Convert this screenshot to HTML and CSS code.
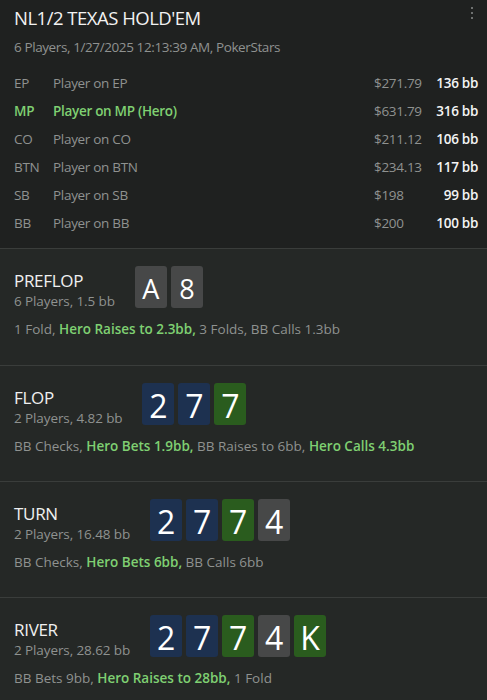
FILE: index.html
```html
<!DOCTYPE html>
<html>
<head>
<meta charset="utf-8">
<link rel="stylesheet" href="styles.css">
</head>
<body>
<div class="header">
  <div class="menu"><span></span><span></span><span></span></div>
  <div class="title">NL1/2 TEXAS HOLD'EM</div>
  <div class="sub">6 Players, 1/27/2025 12:13:39 AM, PokerStars</div>
  <div class="players">
    <div class="row"><span class="pos">EP</span><span class="name">Player on EP</span><span class="money">$271.79</span><span class="bb">136 bb</span></div>
    <div class="row hero"><span class="pos">MP</span><span class="name">Player on MP (Hero)</span><span class="money">$631.79</span><span class="bb">316 bb</span></div>
    <div class="row"><span class="pos">CO</span><span class="name">Player on CO</span><span class="money">$211.12</span><span class="bb">106 bb</span></div>
    <div class="row"><span class="pos">BTN</span><span class="name">Player on BTN</span><span class="money">$234.13</span><span class="bb">117 bb</span></div>
    <div class="row"><span class="pos">SB</span><span class="name">Player on SB</span><span class="money">$198</span><span class="bb">99 bb</span></div>
    <div class="row"><span class="pos">BB</span><span class="name">Player on BB</span><span class="money">$200</span><span class="bb">100 bb</span></div>
  </div>
</div>

<div class="street">
  <div class="street-top">
    <div class="street-info">
      <div class="street-name">PREFLOP</div>
      <div class="street-sub">6 Players, 1.5 bb</div>
    </div>
    <div class="cards hole">
      <div class="card gray">A</div>
      <div class="card gray">8</div>
    </div>
  </div>
  <div class="actions">1 Fold, <b>Hero Raises to 2.3bb,</b> 3 Folds, BB Calls 1.3bb</div>
</div>

<div class="street">
  <div class="street-top">
    <div class="street-info">
      <div class="street-name">FLOP</div>
      <div class="street-sub">2 Players, 4.82 bb</div>
    </div>
    <div class="cards board">
      <div class="card blue">2</div>
      <div class="card blue">7</div>
      <div class="card green">7</div>
    </div>
  </div>
  <div class="actions">BB Checks, <b>Hero Bets 1.9bb,</b> BB Raises to 6bb, <b>Hero Calls 4.3bb</b></div>
</div>

<div class="street">
  <div class="street-top">
    <div class="street-info">
      <div class="street-name">TURN</div>
      <div class="street-sub">2 Players, 16.48 bb</div>
    </div>
    <div class="cards board">
      <div class="card blue">2</div>
      <div class="card blue">7</div>
      <div class="card green">7</div>
      <div class="card gray">4</div>
    </div>
  </div>
  <div class="actions">BB Checks, <b>Hero Bets 6bb,</b> BB Calls 6bb</div>
</div>

<div class="street">
  <div class="street-top">
    <div class="street-info">
      <div class="street-name">RIVER</div>
      <div class="street-sub">2 Players, 28.62 bb</div>
    </div>
    <div class="cards board">
      <div class="card blue">2</div>
      <div class="card blue">7</div>
      <div class="card green">7</div>
      <div class="card gray">4</div>
      <div class="card green">K</div>
    </div>
  </div>
  <div class="actions">BB Bets 9bb, <b>Hero Raises to 28bb,</b> 1 Fold</div>
</div>
</body>
</html>
```

FILE: styles.css
```css
* { box-sizing: border-box; }
html, body {
  margin: 0;
  padding: 0;
  background: #252826;
}
body {
  font-family: "Open Sans", "Noto Sans", sans-serif;
  color: #8f9290;
  width: 487px;
  height: 700px;
  overflow: hidden;
}
.header {
  position: relative;
  background: #1f2120;
  padding: 5px 9px 11px 14px;
  border-bottom: 1px solid #3a3d3b;
}
.menu {
  position: absolute;
  top: 7px;
  right: 14px;
  display: flex;
  flex-direction: column;
  gap: 3px;
}
.menu span {
  width: 2px;
  height: 2px;
  background: #8a8d8b;
  border-radius: 1px;
}
.title {
  font-size: 18.5px;
  line-height: 26px;
  color: #f2f2f2;
  letter-spacing: -0.5px;
}
.sub {
  font-size: 13.5px;
  line-height: 20px;
  margin-top: 6px;
  letter-spacing: -0.4px;
}
.players {
  margin-top: 12px;
  display: flex;
  flex-direction: column;
}
.row {
  display: grid;
  grid-template-columns: 39px 1fr 56px 48px;
  font-size: 13.5px;
  line-height: 28px;
  letter-spacing: -0.3px;
}
.row .bb {
  text-align: right;
  color: #f4f4f4;
  font-weight: 600;
}
.row.hero .pos, .row.hero .name {
  color: #7fd072;
  font-weight: 600;
}
.street {
  border-top: 1px solid #3a3d3b;
  padding: 17px 14px 0 14px;
  height: 116px;
}
.header + .street { border-top: none; }
.street-top {
  display: flex;
  align-items: flex-start;
  gap: 20px;
}
.street-info {
  display: flex;
  flex-direction: column;
  margin-top: 4px;
}
.street-name {
  font-size: 17px;
  line-height: 22px;
  color: #f0f0f0;
  letter-spacing: -0.3px;
}
.street-sub {
  font-size: 13.5px;
  line-height: 19px;
  letter-spacing: -0.1px;
}
.cards {
  display: flex;
  gap: 4px;
}
.card {
  width: 32px;
  height: 42px;
  border-radius: 3px;
  color: #ffffff;
  line-height: 45px;
  text-align: center;
}
.cards.hole .card { font-size: 27px; }
.cards.board .card { font-size: 32px; }
.card.gray { background: #474848; }
.card.blue { background: #1d3150; }
.card.green { background: #2a5c1e; }
.actions {
  margin-top: 9px;
  font-size: 13.5px;
  line-height: 19px;
  letter-spacing: 0;
}
.actions b {
  color: #7fd072;
  font-weight: 600;
}
```
